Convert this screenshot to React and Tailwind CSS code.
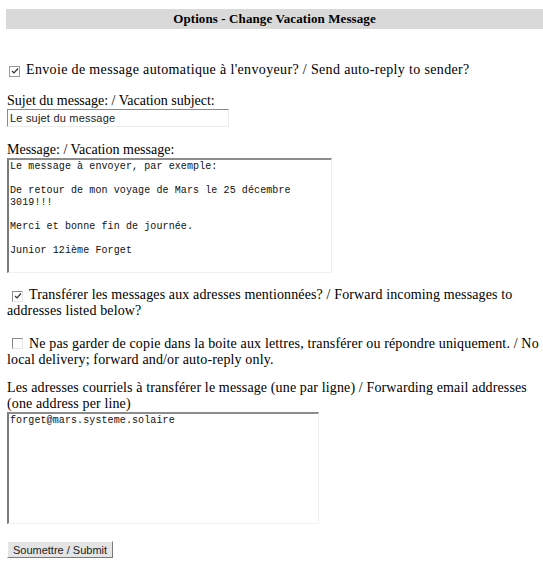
export default function App() {
  const serif = { fontFamily: '"Liberation Serif", "Times New Roman", serif' };
  const Box = ({ checked, inset }) => (
    <span
      className={
        "inline-flex items-center justify-center w-[11px] h-[11px] align-[-1px] mr-[6px] bg-white " +
        (inset
          ? "border border-t-[#8a8a8a] border-l-[#8a8a8a] border-r-[#e6e6e6] border-b-[#e6e6e6]"
          : "border border-[#9a9a9a]")
      }
    >
      {checked && (
        <svg width="8" height="8" viewBox="0 0 8 8">
          <path d="M1 4 L3 6 L7 1.5" fill="none" stroke="#333" strokeWidth="1.2" />
        </svg>
      )}
    </span>
  );
  return (
    <div className="w-[543px] h-[568px] bg-white text-black text-[14px] leading-[16px] overflow-hidden" style={serif}>
      <div className="pt-[9px] pl-[6px]">
        <div className="h-[20px] bg-[#d9d9d9] flex items-center justify-center font-bold text-[13px] tracking-[0.1px]">
          Options - Change Vacation Message
        </div>
      </div>
      <div className="pl-[7px]">
        <div className="mt-[33px] pl-[2px] whitespace-nowrap tracking-[0.35px]">
          <Box checked />
          Envoie de message automatique à l'envoyeur? / Send auto-reply to sender?
        </div>
        <div className="mt-[15px]">Sujet du message: / Vacation subject:</div>
        <div className="w-[222px] h-[18px] border border-t-[#8a8a8a] border-l-[#8a8a8a] border-r-[#ececec] border-b-[#ececec] px-[2px] text-[11px] leading-[16px] text-[#222] tracking-[0.2px]" style={{ fontFamily: '"Liberation Sans", Arial, sans-serif' }}>
          Le sujet du message
        </div>
        <div className="mt-[15px]">Message: / Vacation message:</div>
        <div
          className="w-[325px] h-[115px] border-t-2 border-l-2 border-r border-b border-t-[#8c8c8c] border-l-[#7a7a7a] border-r-[#f0f0f0] border-b-[#f0f0f0] pl-[1px] pt-[1px] text-[10px] leading-[12px] whitespace-pre text-[#111] tracking-[0.1px]"
          style={{ fontFamily: '"Liberation Mono", "Courier New", monospace' }}
        >
          {"Le message à envoyer, par exemple:\n\nDe retour de mon voyage de Mars le 25 décembre\n3019!!!\n\nMerci et bonne fin de journée.\n\nJunior 12ième Forget"}
        </div>
        <div className="mt-[14px] whitespace-nowrap tracking-[0.13px]">
          <span className="pl-[5px]">
            <Box checked inset />
          </span>
          Transférer les messages aux adresses mentionnées? / Forward incoming messages to
          <br />
          addresses listed below?
        </div>
        <div className="mt-[17px] whitespace-nowrap tracking-[0.15px]">
          <span className="pl-[5px]">
            <Box inset />
          </span>
          Ne pas garder de copie dans la boite aux lettres, transférer ou répondre uniquement. / No
          <br />
          local delivery; forward and/or auto-reply only.
        </div>
        <div className="mt-[12px] whitespace-nowrap tracking-[0.13px]">
          Les adresses courriels à transférer le message (une par ligne) / Forwarding email addresses
          <br />
          (one address per line)
        </div>
        <div
          className="w-[312px] h-[112px] border-t-2 border-l-2 border-r border-b border-t-[#8c8c8c] border-l-[#7a7a7a] border-r-[#f0f0f0] border-b-[#f0f0f0] pl-[1px] pt-[1px] text-[10px] leading-[12px] whitespace-pre text-[#111] tracking-[0.1px]"
          style={{ fontFamily: '"Liberation Mono", "Courier New", monospace' }}
        >
          forget@mars.systeme.solaire
        </div>
        <div className="mt-[17px]">
          <button
            className="h-[17px] w-[106px] bg-[#e4e4e4] border border-t-white border-l-white border-r-[#7a7a7a] border-b-[#7a7a7a] text-[11px] leading-[14px] text-[#222]"
            style={{ fontFamily: '"Liberation Sans", Arial, sans-serif' }}
          >
            Soumettre / Submit
          </button>
        </div>
      </div>
    </div>
  );
}
